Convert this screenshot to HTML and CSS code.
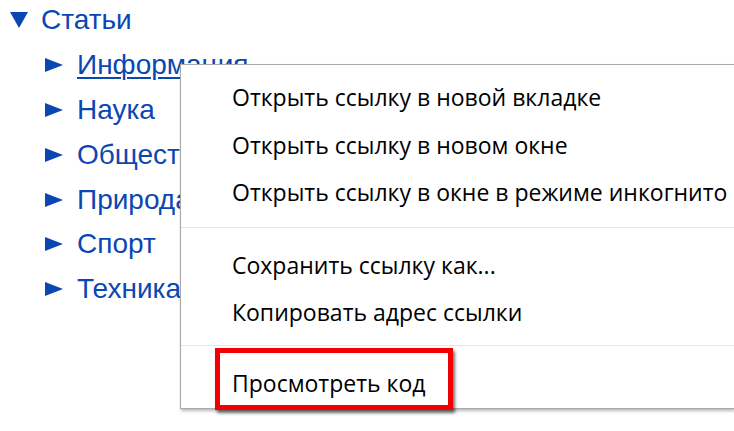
FILE: index.html
```html
<!DOCTYPE html>
<html lang="ru">
<head>
<meta charset="utf-8">
<link rel="stylesheet" href="styles.css">
</head>
<body>
<ul class="tree">
  <li class="root">
    <div class="row"><span class="tri-down"></span><span class="label">Статьи</span></div>
    <ul class="sub">
      <li class="row"><span class="tri-right"></span><a class="label link" href="#">Информация</a></li>
      <li class="row"><span class="tri-right"></span><span class="label">Наука</span></li>
      <li class="row"><span class="tri-right"></span><span class="label">Общество</span></li>
      <li class="row"><span class="tri-right"></span><span class="label">Природа</span></li>
      <li class="row"><span class="tri-right"></span><span class="label">Спорт</span></li>
      <li class="row"><span class="tri-right"></span><span class="label">Техника</span></li>
    </ul>
  </li>
</ul>

<div class="menu">
  <div class="item">Открыть ссылку в новой вкладке</div>
  <div class="item">Открыть ссылку в новом окне</div>
  <div class="item">Открыть ссылку в окне в режиме инкогнито</div>
  <div class="sep sep1"></div>
  <div class="item">Сохранить ссылку как...</div>
  <div class="item">Копировать адрес ссылки</div>
  <div class="sep sep2"></div>
  <div class="item">Просмотреть код</div>
</div>
<div class="highlight"></div>
</body>
</html>
```
FILE: styles.css
```css
html, body {
  margin: 0;
  padding: 0;
  background: #ffffff;
  overflow: hidden;
  width: 734px;
  height: 431px;
}
body {
  font-family: "Liberation Sans", Arial, sans-serif;
  position: relative;
}
.tree, .sub {
  list-style: none;
  margin: 0;
  padding: 0;
}
.tree {
  padding: 0 0 0 10px;
}
.sub {
  padding-left: 35px;
}
.row {
  display: flex;
  align-items: center;
  height: 44.8px;
  color: #0b47b3;
  font-size: 28px;
}
.root > .row {
  margin-top: -2px;
}
.tri-down {
  width: 0;
  height: 0;
  border-left: 9.5px solid transparent;
  border-right: 9.5px solid transparent;
  border-top: 16px solid #0b47b3;
  margin-right: 13px;
}
.tri-right {
  width: 0;
  height: 0;
  border-top: 7.5px solid transparent;
  border-bottom: 7.5px solid transparent;
  border-left: 18px solid #0b47b3;
  margin-right: 14px;
}
.label {
  color: #0b47b3;
  text-decoration: none;
}
.link {
  text-decoration: underline;
  text-decoration-thickness: 2px;
  text-underline-offset: 3px;
}
.menu {
  position: absolute;
  left: 180px;
  top: 64px;
  right: 0;
  height: 345px;
  background: #ffffff;
  border: 1px solid #a9a9a9;
  border-right: none;
  box-shadow: 1px 2px 3px rgba(0, 0, 0, 0.28);
  padding-top: 9px;
  box-sizing: border-box;
  font-family: "Open Sans", "Noto Sans", sans-serif;
  font-size: 23px;
  color: #000000;
  overflow: hidden;
}
.item {
  height: 47.5px;
  line-height: 47.5px;
  padding-left: 51px;
  white-space: nowrap;
}
.sep {
  height: 1px;
  background: #e6e6e6;
}
.sep1 {
  margin: 10px 0 14px;
}
.sep2 {
  margin: 8px 0 14px;
}
.highlight {
  position: absolute;
  left: 215px;
  top: 348px;
  width: 238px;
  height: 62px;
  box-sizing: border-box;
  border: 5px solid #f50000;
  box-shadow: 2px 3px 3px rgba(0, 0, 0, 0.55);
}
```
